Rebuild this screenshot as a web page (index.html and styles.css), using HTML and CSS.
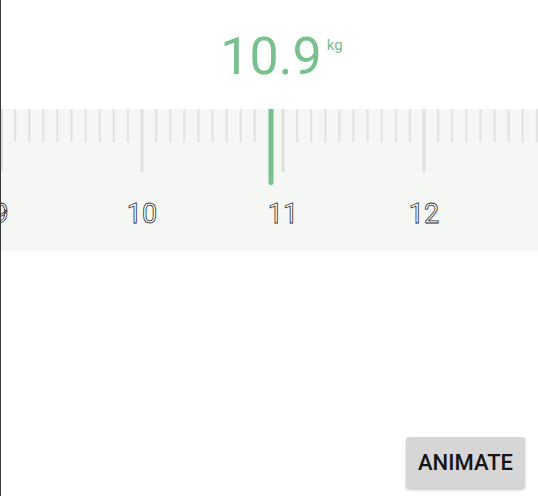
FILE: index.html
```html
<!DOCTYPE html>
<html lang="en">
<head>
<meta charset="utf-8">
<title>Weight ruler</title>
<link rel="stylesheet" href="styles.css">
</head>
<body>
<div class="app">
  <header class="readout">
    <span class="value">10.9<span class="unit">kg</span></span>
  </header>
  <div class="ruler">
    <svg class="ruler-svg" width="537" height="142" viewBox="0 0 537 142">
      <g class="ticks-minor">
        <line x1="14.1" y1="0" x2="14.1" y2="33"/>
        <line x1="28.2" y1="0" x2="28.2" y2="33"/>
        <line x1="42.3" y1="0" x2="42.3" y2="33"/>
        <line x1="56.4" y1="0" x2="56.4" y2="33"/>
        <line x1="70.5" y1="0" x2="70.5" y2="33"/>
        <line x1="84.6" y1="0" x2="84.6" y2="33"/>
        <line x1="98.7" y1="0" x2="98.7" y2="33"/>
        <line x1="112.8" y1="0" x2="112.8" y2="33"/>
        <line x1="126.9" y1="0" x2="126.9" y2="33"/>
        <line x1="155.1" y1="0" x2="155.1" y2="33"/>
        <line x1="169.2" y1="0" x2="169.2" y2="33"/>
        <line x1="183.3" y1="0" x2="183.3" y2="33"/>
        <line x1="197.4" y1="0" x2="197.4" y2="33"/>
        <line x1="211.5" y1="0" x2="211.5" y2="33"/>
        <line x1="225.6" y1="0" x2="225.6" y2="33"/>
        <line x1="239.7" y1="0" x2="239.7" y2="33"/>
        <line x1="253.8" y1="0" x2="253.8" y2="33"/>
        <line x1="296.1" y1="0" x2="296.1" y2="33"/>
        <line x1="310.2" y1="0" x2="310.2" y2="33"/>
        <line x1="324.3" y1="0" x2="324.3" y2="33"/>
        <line x1="338.4" y1="0" x2="338.4" y2="33"/>
        <line x1="352.5" y1="0" x2="352.5" y2="33"/>
        <line x1="366.6" y1="0" x2="366.6" y2="33"/>
        <line x1="380.7" y1="0" x2="380.7" y2="33"/>
        <line x1="394.8" y1="0" x2="394.8" y2="33"/>
        <line x1="408.9" y1="0" x2="408.9" y2="33"/>
        <line x1="437.1" y1="0" x2="437.1" y2="33"/>
        <line x1="451.2" y1="0" x2="451.2" y2="33"/>
        <line x1="465.3" y1="0" x2="465.3" y2="33"/>
        <line x1="479.4" y1="0" x2="479.4" y2="33"/>
        <line x1="493.5" y1="0" x2="493.5" y2="33"/>
        <line x1="507.6" y1="0" x2="507.6" y2="33"/>
        <line x1="521.7" y1="0" x2="521.7" y2="33"/>
        <line x1="535.8" y1="0" x2="535.8" y2="33"/>
      </g>
      <g class="ticks-major">
        <line x1="0.5" y1="0" x2="0.5" y2="63"/>
        <line x1="141" y1="0" x2="141" y2="63"/>
        <line x1="282" y1="0" x2="282" y2="63"/>
        <line x1="423" y1="0" x2="423" y2="63"/>
      </g>
      <g class="labels">
        <text x="0" y="114">9</text>
        <text x="141" y="114">10</text>
        <text x="282" y="114">11</text>
        <text x="423" y="114">12</text>
      </g>
      <path class="indicator" d="M267.5 0 H272.5 V73.5 A2.5 2.5 0 0 1 267.5 73.5 Z"/>
    </svg>
  </div>
  <div class="actions">
    <button class="btn" type="button">ANIMATE</button>
  </div>
</div>
</body>
</html>
```
FILE: styles.css
```css
* { box-sizing: border-box; }
html, body { margin: 0; padding: 0; background: #ffffff; }
body { font-family: Roboto, "Noto Sans", "Liberation Sans", sans-serif; }

.app {
  display: flex;
  flex-direction: column;
  height: 496px;
  border-left: 1px solid #3a3a3a;
}

.readout {
  height: 109px;
  display: flex;
  justify-content: center;
  align-items: flex-start;
  padding-top: 27px;
}

.value {
  position: relative;
  font-size: 52px;
  line-height: 60px;
  color: #78c08e;
  font-weight: 400;
  margin-left: 3px;
}

.unit {
  position: absolute;
  left: 100%;
  top: 8px;
  margin-left: 5px;
  font-size: 15px;
  line-height: 20px;
}

.ruler {
  height: 142px;
  background: #f5f7f5;
}

.ruler-svg { display: block; }

.ticks-minor line { stroke: #e1e3e1; stroke-width: 2; }
.ticks-major line { stroke: #dfe1df; stroke-width: 3; }

.labels text {
  font-family: Roboto, "Noto Sans", "Liberation Sans", sans-serif;
  font-size: 27px;
  text-anchor: middle;
  fill: #ffffff;
  stroke: #2a2a2a;
  stroke-width: 0.8;
}

.indicator { fill: #78c08e; }

.actions {
  flex: 1;
  display: flex;
  justify-content: flex-end;
  align-items: flex-end;
  padding: 0 13px 8px 0;
}

.btn {
  width: 119px;
  height: 51px;
  border: none;
  border-radius: 3px;
  background: #d6d6d6;
  box-shadow: 0 2px 3px rgba(0,0,0,0.22);
  font-family: Roboto, "Noto Sans", "Liberation Sans", sans-serif;
  font-size: 22px;
  font-weight: 500;
  color: #151515;
  padding: 0;
}
```
